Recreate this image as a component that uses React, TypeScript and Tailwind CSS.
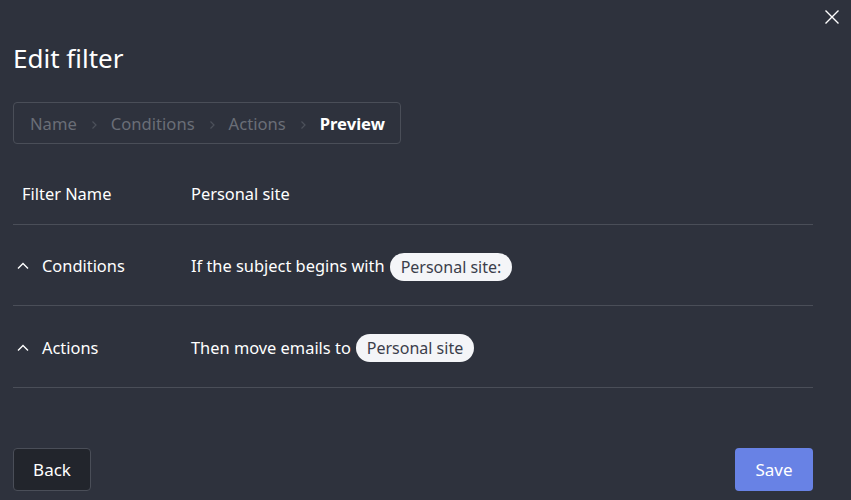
import React from "react";

const font = { fontFamily: '"Noto Sans", "Open Sans", sans-serif' };

function Chevron() {
  return (
    <svg width="10" height="10" viewBox="0 0 10 10" className="mx-[12px]">
      <path d="M3.5 1.5 L7 5 L3.5 8.5" fill="none" stroke="#4d515b" strokeWidth="1.2" />
    </svg>
  );
}

function Up() {
  return (
    <svg width="14" height="10" viewBox="0 0 14 10" className="mr-[12px]">
      <path d="M2 7.5 L7 2.5 L12 7.5" fill="none" stroke="#ffffff" strokeWidth="1.4" />
    </svg>
  );
}

function Pill({ children }: { children: React.ReactNode }) {
  return (
    <span className="ml-[5px] inline-flex h-[28px] items-center rounded-full bg-[#f4f5f8] px-[11px] text-[16px] text-[#3b3e4b]">
      {children}
    </span>
  );
}

export default function App() {
  return (
    <div style={font} className="relative h-[500px] w-[851px] overflow-hidden bg-[#2e323d] text-white">
      <button className="absolute right-[10px] top-[8px] p-[1px]">
        <svg width="16" height="16" viewBox="0 0 16 16">
          <path d="M1.5 1.5 L14.5 14.5 M14.5 1.5 L1.5 14.5" stroke="#ffffff" strokeWidth="1.4" />
        </svg>
      </button>
      <div className="flex flex-col px-[13px] pt-[40px]">
        <h1 className="h-[36px] text-[26px] leading-[36px] font-normal">Edit filter</h1>
        <div className="mt-[26px] flex h-[42px] w-[388px] items-center rounded-[4px] border border-[#4a4e58] pl-[16px] pt-[3px] text-[16.6px]">
          <span className="text-[#6a6e77]">Name</span>
          <Chevron />
          <span className="text-[#6a6e77]">Conditions</span>
          <Chevron />
          <span className="text-[#6a6e77]">Actions</span>
          <Chevron />
          <span className="font-bold text-white">Preview</span>
        </div>
        <div className="mt-[19px] w-[800px] text-[16.4px]">
          <div className="flex h-[62px] items-center border-b border-[#4a4e58] pt-[1px]">
            <div className="w-[178px] pl-[9px]">Filter Name</div>
            <div>Personal site</div>
          </div>
          <div className="flex h-[81px] items-center border-b border-[#4a4e58] pt-[3px]">
            <div className="flex w-[178px] items-center pl-[3px]">
              <Up />
              <span>Conditions</span>
            </div>
            <div className="flex items-center">
              <span>If the subject begins with</span>
              <Pill>Personal site:</Pill>
            </div>
          </div>
          <div className="flex h-[82px] items-center border-b border-[#4a4e58] pt-[3px]">
            <div className="flex w-[178px] items-center pl-[3px]">
              <Up />
              <span>Actions</span>
            </div>
            <div className="flex items-center">
              <span>Then move emails to</span>
              <Pill>Personal site</Pill>
            </div>
          </div>
        </div>
        <div className="mt-[60px] flex w-[800px] justify-between">
          <button className="h-[43px] w-[78px] rounded-[4px] border border-[#4a4e58] bg-[#22252c] text-[17px] text-white">
            Back
          </button>
          <button className="h-[43px] w-[78px] rounded-[4px] bg-[#6882e5] text-[17px] text-white">
            Save
          </button>
        </div>
      </div>
    </div>
  );
}
